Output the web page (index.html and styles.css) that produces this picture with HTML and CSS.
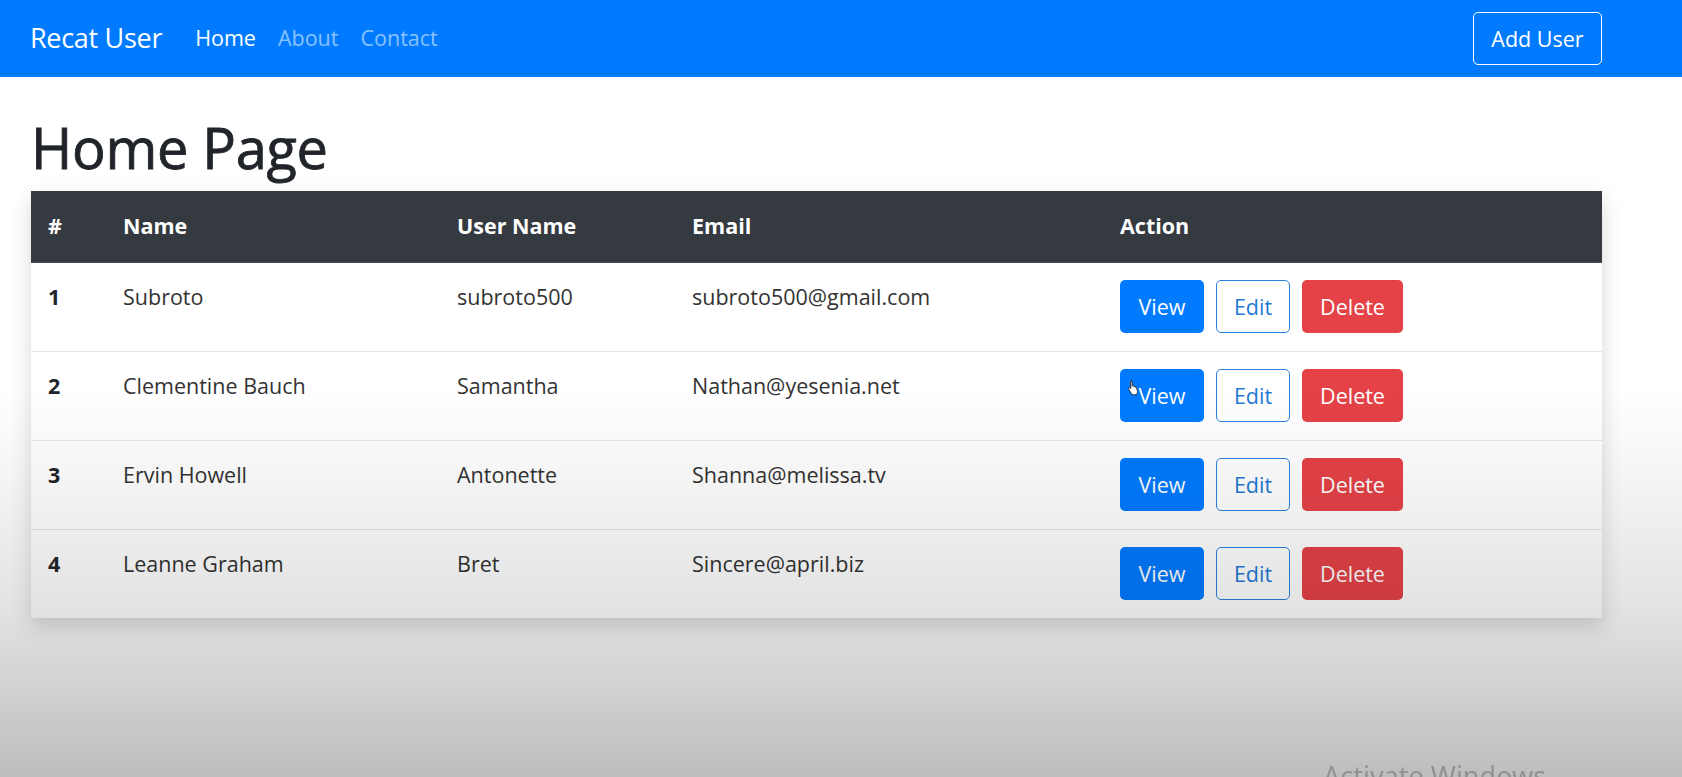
FILE: index.html
```html
<!DOCTYPE html>
<html lang="en">
<head>
<meta charset="utf-8">
<title>Recat User</title>
<link rel="stylesheet" href="styles.css">
</head>
<body>
<nav class="navbar">
  <div class="nav-left">
    <a class="brand" href="#">Recat User</a>
    <ul class="nav-links">
      <li><a class="nav-link active" href="#">Home</a></li>
      <li><a class="nav-link" href="#">About</a></li>
      <li><a class="nav-link" href="#">Contact</a></li>
    </ul>
  </div>
  <a class="btn btn-outline-light" href="#">Add User</a>
</nav>
<main class="container">
  <h1 class="page-title">Home Page</h1>
  <table class="users">
    <thead>
      <tr>
        <th class="c-num">#</th>
        <th class="c-name">Name</th>
        <th class="c-user">User Name</th>
        <th class="c-email">Email</th>
        <th class="c-action">Action</th>
      </tr>
    </thead>
    <tbody>
      <tr>
        <th>1</th><td>Subroto</td><td>subroto500</td><td>subroto500@gmail.com</td>
        <td><div class="actions"><a class="btn btn-primary" href="#">View</a><a class="btn btn-outline-primary" href="#">Edit</a><a class="btn btn-danger" href="#">Delete</a></div></td>
      </tr>
      <tr>
        <th>2</th><td>Clementine Bauch</td><td>Samantha</td><td>Nathan@yesenia.net</td>
        <td><div class="actions"><a class="btn btn-primary has-cursor" href="#">View<svg class="cursor" viewBox="0 0 16 20" width="13" height="17"><path d="M5 1.5c.8 0 1.4.6 1.4 1.4v5.3l.4-.1c.7-.3 1.5 0 1.7.7l.2.1c.6-.3 1.4 0 1.6.7.6-.2 1.3.1 1.5.8l.9 3.3c.4 1.5.1 3-.7 4.2l-.8 1.1H6.4L2.2 12.4c-.5-.6-.4-1.5.2-1.9.6-.4 1.4-.3 1.8.3l.4.5V2.9c0-.8.6-1.4 1.4-1.4z" fill="#fff" stroke="#222" stroke-width="1.1" stroke-linejoin="round"/></svg></a><a class="btn btn-outline-primary" href="#">Edit</a><a class="btn btn-danger" href="#">Delete</a></div></td>
      </tr>
      <tr>
        <th>3</th><td>Ervin Howell</td><td>Antonette</td><td>Shanna@melissa.tv</td>
        <td><div class="actions"><a class="btn btn-primary" href="#">View</a><a class="btn btn-outline-primary" href="#">Edit</a><a class="btn btn-danger" href="#">Delete</a></div></td>
      </tr>
      <tr>
        <th>4</th><td>Leanne Graham</td><td>Bret</td><td>Sincere@april.biz</td>
        <td><div class="actions"><a class="btn btn-primary" href="#">View</a><a class="btn btn-outline-primary" href="#">Edit</a><a class="btn btn-danger" href="#">Delete</a></div></td>
      </tr>
    </tbody>
  </table>
</main>
<div class="fade-overlay"></div>
<div class="watermark">Activate Windows</div>
</body>
</html>
```
FILE: styles.css
```css
* { box-sizing: border-box; }
html, body { height: 100%; }
body {
  margin: 0;
  font-family: "Open Sans", "Noto Sans", sans-serif;
  font-size: 21.5px;
  line-height: 1.5;
  color: #212529;
  background: #fff;
  overflow: hidden;
}
a { text-decoration: none; }

.navbar {
  display: flex;
  align-items: center;
  justify-content: space-between;
  height: 77px;
  padding: 0 80px 0 30px;
  background: #007bff;
}
.nav-left { display: flex; align-items: center; }
.brand {
  color: #fff;
  font-size: 27px;
  margin-right: 22px;
  letter-spacing: -0.3px;
}
.nav-links { display: flex; list-style: none; margin: 0; padding: 0; }
.nav-link {
  display: block;
  padding: 8px 11px;
  color: rgba(255,255,255,0.55);
  font-size: 21.5px;
}
.nav-link.active { color: #fff; }

.btn {
  display: inline-flex;
  align-items: center;
  justify-content: center;
  height: 53px;
  padding: 2px 16px 0;
  border: 1.5px solid transparent;
  border-radius: 5px;
  font-size: 21.5px;
  line-height: 1;
}
.btn-outline-light { color: #fff; border-color: #fff; width: 129px; padding-top: 0; }
.btn-primary { background: #007bff; color: #fff; width: 84px; }
.btn-outline-primary { background: #fff; color: #1f7ad6; border-color: #2a82e0; width: 74px; }
.btn-danger { background: #e54247; color: #fff; width: 101px; }

.container { padding: 0 80px 0 31px; }
.page-title {
  margin: 0;
  padding-top: 35px;
  height: 114px;
  font-size: 56px;
  font-weight: 500;
  line-height: 1.25;
  letter-spacing: -0.3px;
  -webkit-text-stroke: 0.8px #212529;
}

.users {
  width: 100%;
  table-layout: fixed;
  border-collapse: collapse;
  box-shadow: 0 8px 20px rgba(0,0,0,0.16);
  background: #fff;
}
.users thead th {
  background: #343a40;
  color: #fff;
  height: 71px;
  text-align: left;
  font-weight: 700;
  padding: 0 17px;
  vertical-align: middle;
  border-bottom: 1px solid #454d55;
}
.c-num { width: 75px; }
.c-name { width: 334px; }
.c-user { width: 235px; }
.c-email { width: 428px; }
.users tbody th, .users tbody td {
  height: 89px;
  padding: 18px 17px 16px;
  text-align: left;
  vertical-align: top;
  border-top: 1px solid #e4e6e8;
}
.users tbody td:last-child { padding-top: 17px; }
.users tbody tr:first-child th, .users tbody tr:first-child td { border-top: 0; }
.users tbody th { font-weight: 700; }
.users tbody td { color: #333; }
.actions { display: flex; gap: 12px; }
.has-cursor { position: relative; }
.cursor { position: absolute; left: 6px; top: 9px; }

.fade-overlay {
  position: fixed;
  inset: 0;
  pointer-events: none;
  background: linear-gradient(to bottom,
    rgba(0,0,0,0) 0%,
    rgba(0,0,0,0) 50%,
    rgba(0,0,0,0.04) 61%,
    rgba(0,0,0,0.11) 78%,
    rgba(0,0,0,0.19) 90%,
    rgba(0,0,0,0.26) 100%);
}
.watermark {
  position: fixed;
  left: 1323px;
  top: 756px;
  font-family: "Noto Sans", sans-serif;
  font-size: 27px;
  color: rgba(90,90,90,0.45);
  white-space: nowrap;
}
```
